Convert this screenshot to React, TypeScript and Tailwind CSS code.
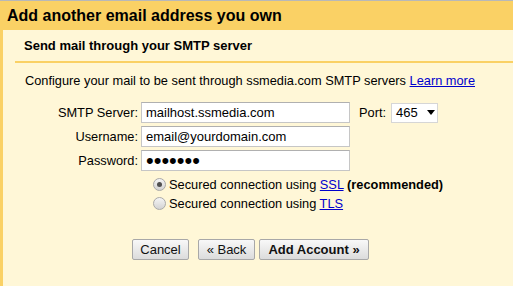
import React from "react";

function Radio({ checked }: { checked?: boolean }) {
  return (
    <span className="flex h-[13px] w-[13px] items-center justify-center rounded-full border border-[#a9a9a9] bg-gradient-to-b from-[#f5f5f5] to-[#d3d3d3]">
      {checked ? <span className="h-[5px] w-[5px] rounded-full bg-[#505050]" /> : null}
    </span>
  );
}

function Btn({ children, bold, w }: { children: React.ReactNode; bold?: boolean; w: string }) {
  return (
    <button
      className={
        "flex h-[21px] items-center justify-center rounded-[2px] border border-[#a8a8a8] bg-gradient-to-b from-[#f8f8f8] to-[#dcdcdc] text-[13px] text-[#111] " +
        (bold ? "font-bold " : "") +
        w
      }
    >
      {children}
    </button>
  );
}

export default function App() {
  return (
    <div className="h-[286px] w-[513px] overflow-hidden border-t border-[#b8b8b8] bg-[#fad165] font-['Liberation_Sans',Arial,sans-serif] text-black">
      <div className="flex h-[29px] items-center pl-[7px] text-[16px] font-bold leading-[18px]">
        Add another email address you own
      </div>
      <div className="ml-[3px] h-full bg-[#fff7d7] pl-[12px]">
        <div className="h-[33px] border-b-2 border-[#fad165] pl-[9px] pt-[8px] text-[13px] font-bold leading-[15px]">
          Send mail through your SMTP server
        </div>
        <div className="pl-[10px] pt-[10px] text-[12.8px] leading-[15px]">
          Configure your mail to be sent through ssmedia.com SMTP servers{" "}
          <a className="text-[#0000cc] underline">Learn more</a>
        </div>
        <div className="mt-[14px] flex flex-col gap-[3px] pl-[10px] text-[12.8px]">
          <div className="flex items-center">
            <label className="w-[113px] text-right">SMTP Server:</label>
            <input
              readOnly
              value="mailhost.ssmedia.com"
              className="ml-[3px] h-[21px] w-[209px] border border-[#c6c6c6] border-t-[#b0b0b0] bg-white px-[4px] text-[13px] outline-none"
            />
            <span className="ml-[9px]">Port:</span>
            <div className="ml-[5px] flex h-[20px] w-[47px] items-center border border-[#d6d6d6] bg-white pl-[4px] text-[13px]">
              <span>465</span>
              <svg width="8" height="5" viewBox="0 0 8 5" className="ml-[9px]">
                <path d="M0 0h8L4 5z" fill="#000" />
              </svg>
            </div>
          </div>
          <div className="flex items-center">
            <label className="w-[113px] text-right">Username:</label>
            <input
              readOnly
              value="email@yourdomain.com"
              className="ml-[3px] h-[21px] w-[209px] border border-[#c6c6c6] border-t-[#b0b0b0] bg-white px-[4px] text-[13px] outline-none"
            />
          </div>
          <div className="flex items-center">
            <label className="w-[113px] text-right">Password:</label>
            <input
              readOnly
              type="password"
              value="1234567"
              className="ml-[3px] h-[21px] w-[209px] border border-[#c6c6c6] border-t-[#b0b0b0] bg-white px-[4px] text-[22px] outline-none"
            />
          </div>
        </div>
        <div className="mt-[7px] flex flex-col gap-[6px] pl-[138px] text-[12.8px] leading-[13px]">
          <div className="flex items-center gap-[3px]">
            <Radio checked />
            <span>
              Secured connection using <a className="text-[#0000cc] underline">SSL</a>{" "}
              <b>(recommended)</b>
            </span>
          </div>
          <div className="flex items-center gap-[3px]">
            <Radio />
            <span>
              Secured connection using <a className="text-[#0000cc] underline">TLS</a>
            </span>
          </div>
        </div>
        <div className="mt-[29px] flex pl-[117px]">
          <Btn w="w-[57px]">Cancel</Btn>
          <Btn w="ml-[9px] w-[57px]">« Back</Btn>
          <Btn bold w="ml-[4px] w-[110px]">
            Add Account »
          </Btn>
        </div>
      </div>
    </div>
  );
}
